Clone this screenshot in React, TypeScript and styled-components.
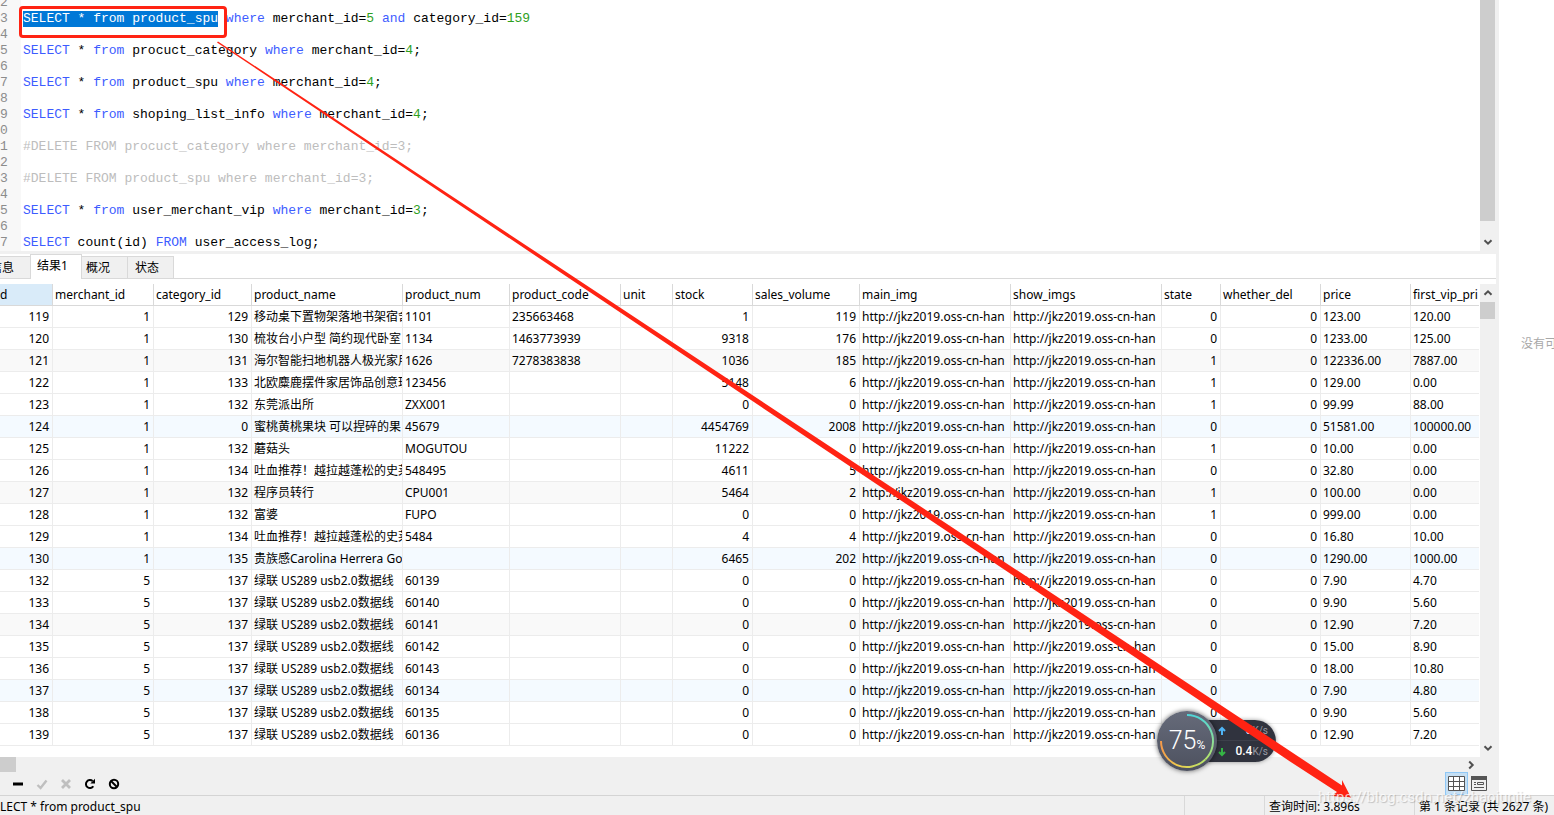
import React from "react";
import styled, { createGlobalStyle } from "styled-components";

const GlobalStyle = createGlobalStyle`
  *, *::before, *::after { box-sizing: border-box; }
  body {
    margin: 0;
    background: #fff;
    color: #000;
    font: 12px/16px "Noto Sans", "Noto Sans CJK SC", sans-serif;
  }
  button { font: inherit; color: inherit; }
`;

const Window = styled.div`
  position: relative;
  display: flex;
  flex-direction: column;
  min-height: 100vh;
  overflow: hidden;
`;

const Workspace = styled.div`
  display: flex;
  flex: 1;
`;

const QueryPane = styled.main`
  display: flex;
  flex: 1;
  flex-direction: column;
  min-width: 0;
  background: #f0f0f0;
`;

const InfoPane = styled.aside`
  display: flex;
  width: 55px;
  padding: 336px 0 0 22px;
  overflow: hidden;
  background: #fff;
  color: #a8a8a8;
  white-space: nowrap;
`;

/* SQL editor */

const Editor = styled.section`
  display: flex;
  height: 251px;
  margin-bottom: 3px;
  padding-right: 4px;
  background: #f0f0f0;
`;

const CodeArea = styled.div`
  display: flex;
  flex: 1;
  flex-direction: column;
  justify-content: flex-end;
  min-width: 0;
  overflow: hidden;
  background: linear-gradient(to right, #f8f8f8 21px, #fff 21px);
`;

const CodeLine = styled.div`
  display: flex;
  flex: none;
  height: 16px;
  font: 13px/16px "Liberation Mono", monospace;
  white-space: pre;
`;

const LineNumber = styled.span`
  width: 23px;
  color: #8c8c8c;
`;

const tokenColors = {
  keyword: "#3d5cff",
  number: "#2ea01e",
  comment: "#bdbdbd",
  plain: "#000",
};

const Token = styled.span<{ $kind: keyof typeof tokenColors }>`
  color: ${(p) => tokenColors[p.$kind]};
`;

const Selection = styled.mark`
  position: relative;
  background: #0078d7;
  color: #fff;
`;

const SelectionFrame = styled.span`
  position: absolute;
  inset: -5px -9px -11px -4px;
  border: 3px solid #ff2313;
  border-radius: 4px;
`;

/* Scroll bars */

const VScroll = styled.div<{ $width: number }>`
  display: flex;
  flex-direction: column;
  width: ${(p) => p.$width}px;
  background: #f0f0f0;
`;

const VThumb = styled.div<{ $size: number }>`
  width: 15px;
  height: ${(p) => p.$size}px;
  background: #cdcdcd;
`;

const ScrollButton = styled.button`
  display: flex;
  align-items: center;
  justify-content: center;
  width: 15px;
  height: 18px;
  padding: 0;
  border: 0;
  background: none;
`;

const Spacer = styled.div`
  flex: 1;
`;

const HScroll = styled.div`
  display: flex;
  align-items: center;
  height: 15px;
  padding-right: 21px;
`;

const HThumb = styled.div`
  width: 16px;
  height: 15px;
  background: #cdcdcd;
`;

/* Result tabs */

const TabBar = styled.div`
  display: flex;
  align-items: flex-end;
  height: 25px;
  margin-right: 3px;
  background: #fff;
  box-shadow: inset 0 -1px #d9d9d9;
`;

const Tab = styled.button<{ $active?: boolean; $width: number }>`
  display: flex;
  justify-content: ${(p) => (p.$width < 40 ? "flex-end" : "flex-start")};
  width: ${(p) => p.$width}px;
  height: ${(p) => (p.$active ? 25 : 23)}px;
  padding: ${(p) => (p.$active ? "3px 0 0 6px" : p.$width < 40 ? "3px 16px 0 0" : "3px 0 0 4px")};
  overflow: hidden;
  border: 1px solid #d9d9d9;
  border-width: ${(p) => (p.$active ? "1px 1px 0" : p.$width < 40 ? "1px 0" : "1px 1px 1px 0")};
  background: ${(p) => (p.$active ? "#fff" : "#f0f0f0")};
  white-space: nowrap;
`;

/* Result grid */

const Results = styled.section`
  display: flex;
  flex: 1;
  padding-top: 5px;
  margin-right: 3px;
  background: #fff;
`;

const GridArea = styled.div`
  flex: 1;
  min-width: 0;
  overflow: hidden;
  padding-right: 1px;
`;

const DataTable = styled.table`
  width: 100%;
  border-spacing: 0;
  table-layout: fixed;
`;

const HeadCell = styled.th`
  height: 22px;
  padding: 0 0 0 2px;
  overflow: hidden;
  border-right: 1px solid #d9d9d9;
  border-bottom: 1px solid #d9d9d9;
  font-weight: 400;
  line-height: 20px;
  text-align: left;
  white-space: nowrap;
  &:first-child { padding-left: 0; background: #d9ebf9; }
  &:last-child { border-right: 0; }
`;

const Row = styled.tr<{ $index: number }>`
  background: ${(p) => (p.$index % 6 === 2 ? "#f9f9f9" : p.$index % 6 === 5 ? "#f4faff" : "#fff")};
`;

const Cell = styled.td<{ $numeric: boolean }>`
  height: 22px;
  padding: 0 ${(p) => (p.$numeric ? 3 : 0)}px 0 2px;
  overflow: hidden;
  border-right: 1px solid #ececec;
  border-bottom: 1px solid #ececec;
  line-height: 21px;
  text-align: ${(p) => (p.$numeric ? "right" : "left")};
  white-space: nowrap;
  &:last-child { border-right: 0; }
`;

/* Record toolbar and status bar */

const Toolbar = styled.div`
  display: flex;
  align-items: center;
  height: 23px;
  padding: 0 8px 0 6px;
`;

const ToolButton = styled.button`
  display: flex;
  align-items: center;
  justify-content: center;
  width: 24px;
  height: 22px;
  padding: 0;
  border: 0;
  background: none;
  color: #000;
  &:disabled { color: #bfbfbf; }
`;

const ViewButton = styled.button<{ $active?: boolean }>`
  display: flex;
  align-items: center;
  justify-content: center;
  width: 23px;
  height: 23px;
  padding: 0;
  border: 1px solid ${(p) => (p.$active ? "#90c8f6" : "transparent")};
  background: ${(p) => (p.$active ? "#c5dff4" : "none")};
`;

const StatusBar = styled.footer`
  display: flex;
  height: 20px;
  overflow: hidden;
  border-top: 1px solid #d4d4d4;
  background: #f0f0f0;
  line-height: 21px;
  white-space: nowrap;
`;

const StatusCell = styled.div<{ $width?: number }>`
  flex: ${(p) => (p.$width ? "none" : "1")};
  width: ${(p) => (p.$width ? p.$width + "px" : "auto")};
  padding-left: ${(p) => (p.$width ? 4 : 0)}px;
  border-left: ${(p) => (p.$width ? "1px solid #d9d9d9" : "0")};
`;

/* Floating system monitor */

const Monitor = styled.div`
  position: absolute;
  top: 711px;
  left: 1157px;
  display: flex;
  align-items: center;
  color: #fff;
`;

const Gauge = styled.div`
  position: relative;
  z-index: 1;
  display: flex;
  align-items: baseline;
  justify-content: center;
  width: 60px;
  height: 60px;
  border-radius: 50%;
  background: linear-gradient(#666b7a, #4d515f);
  box-shadow: 0 0 5px rgba(0, 0, 0, 0.6);
  font: 300 25px/60px Roboto, sans-serif;
`;

const Percent = styled.small`
  font-size: 12px;
  font-weight: 400;
`;

const GaugeRing = styled.svg`
  position: absolute;
  inset: 0;
`;

const Speeds = styled.div`
  width: 82px;
  height: 42px;
  margin-left: -23px;
  padding: 0 8px 0 22px;
  border-radius: 0 21px 21px 0;
  background: linear-gradient(#30333e 20px, #3d404b 20px, #3d404b 21px, #30333e 21px);
  box-shadow: 0 0 4px rgba(0, 0, 0, 0.4);
`;

const Speed = styled.div`
  display: flex;
  align-items: center;
  height: 21px;
  font: 500 12px/21px Roboto, sans-serif;
`;

const Unit = styled.span`
  color: #9a9ca4;
  font-size: 10px;
  font-weight: 400;
`;

const Watermark = styled.div`
  position: absolute;
  right: 23px;
  bottom: 8px;
  color: rgba(255, 255, 255, 0.75);
  font: 15px/20px Roboto, sans-serif;
  text-shadow: 1px 1px 1px rgba(0, 0, 0, 0.2);
`;

const Annotation = styled.svg`
  position: absolute;
  top: 0;
  left: 0;
  pointer-events: none;
`;

function Chevron({ turn }: { turn: number }) {
  return (
    <svg width="10" height="10" viewBox="0 0 10 10">
      <path d="M1.5 3.2 5 6.7 8.5 3.2" fill="none" stroke="#505050" strokeWidth="2" transform={`rotate(${turn} 5 5)`} />
    </svg>
  );
}

const keywords = new Set(["SELECT", "from", "FROM", "where", "and"]);

const lines: [string, string][] = [
  ["2", ""],
  ["3", "SELECT * from product_spu where merchant_id=5 and category_id=159"],
  ["4", ""],
  ["5", "SELECT * from procuct_category where merchant_id=4;"],
  ["6", ""],
  ["7", "SELECT * from product_spu where merchant_id=4;"],
  ["8", ""],
  ["9", "SELECT * from shoping_list_info where merchant_id=4;"],
  ["0", ""],
  ["1", "#DELETE FROM procuct_category where merchant_id=3;"],
  ["2", ""],
  ["3", "#DELETE FROM product_spu where merchant_id=3;"],
  ["4", ""],
  ["5", "SELECT * from user_merchant_vip where merchant_id=3;"],
  ["6", ""],
  ["7", "SELECT count(id) FROM user_access_log;"],
];

const selected = "SELECT * from product_spu";

function Sql({ text }: { text: string }) {
  if (text.startsWith("#")) return <Token $kind="comment">{text}</Token>;
  return (
    <>
      {text.split(/(\b(?:SELECT|from|FROM|where|and)\b|\b\d+\b)/).map((part, i) => (
        <Token key={i} $kind={keywords.has(part) ? "keyword" : /^\d+$/.test(part) ? "number" : "plain"}>
          {part}
        </Token>
      ))}
    </>
  );
}

const columns: { name: string; width?: number; numeric?: boolean }[] = [
  { name: "d", width: 53, numeric: true },
  { name: "merchant_id", width: 101, numeric: true },
  { name: "category_id", width: 98, numeric: true },
  { name: "product_name", width: 151 },
  { name: "product_num", width: 107 },
  { name: "product_code", width: 111 },
  { name: "unit", width: 52 },
  { name: "stock", width: 80, numeric: true },
  { name: "sales_volume", width: 107, numeric: true },
  { name: "main_img", width: 151 },
  { name: "show_imgs", width: 151 },
  { name: "state", width: 59, numeric: true },
  { name: "whether_del", width: 100, numeric: true },
  { name: "price", width: 90 },
  { name: "first_vip_pri" },
];

const url = "http://jkz2019.oss-cn-han";
const cable = "绿联 US289 usb2.0数据线";

/* id, merchant, category, name, num, code, stock, sales, state, price, vip price */
const records = [
  ["119", "1", "129", "移动桌下置物架落地书架宿舍", "1101", "235663468", "1", "119", "0", "123.00", "120.00"],
  ["120", "1", "130", "梳妆台小户型 简约现代卧室", "1134", "1463773939", "9318", "176", "0", "1233.00", "125.00"],
  ["121", "1", "131", "海尔智能扫地机器人极光家用", "1626", "7278383838", "1036", "185", "1", "122336.00", "7887.00"],
  ["122", "1", "133", "北欧麋鹿摆件家居饰品创意玫", "123456", "", "5148", "6", "1", "129.00", "0.00"],
  ["123", "1", "132", "东莞派出所", "ZXX001", "", "0", "0", "1", "99.99", "88.00"],
  ["124", "1", "0", "蜜桃黄桃果块 可以捏碎的果", "45679", "", "4454769", "2008", "0", "51581.00", "100000.00"],
  ["125", "1", "132", "蘑菇头", "MOGUTOU", "", "11222", "0", "1", "10.00", "0.00"],
  ["126", "1", "134", "吐血推荐！越拉越蓬松的史莱", "548495", "", "4611", "5", "0", "32.80", "0.00"],
  ["127", "1", "132", "程序员转行", "CPU001", "", "5464", "2", "1", "100.00", "0.00"],
  ["128", "1", "132", "富婆", "FUPO", "", "0", "0", "1", "999.00", "0.00"],
  ["129", "1", "134", "吐血推荐！越拉越蓬松的史莱", "5484", "", "4", "4", "0", "16.80", "10.00"],
  ["130", "1", "135", "贵族感Carolina Herrera Go", "", "", "6465", "202", "0", "1290.00", "1000.00"],
  ["132", "5", "137", cable, "60139", "", "0", "0", "0", "7.90", "4.70"],
  ["133", "5", "137", cable, "60140", "", "0", "0", "0", "9.90", "5.60"],
  ["134", "5", "137", cable, "60141", "", "0", "0", "0", "12.90", "7.20"],
  ["135", "5", "137", cable, "60142", "", "0", "0", "0", "15.00", "8.90"],
  ["136", "5", "137", cable, "60143", "", "0", "0", "0", "18.00", "10.80"],
  ["137", "5", "137", cable, "60134", "", "0", "0", "0", "7.90", "4.80"],
  ["138", "5", "137", cable, "60135", "", "0", "0", "0", "9.90", "5.60"],
  ["139", "5", "137", cable, "60136", "", "0", "0", "0", "12.90", "7.20"],
];

const rows = records.map(([id, merchant, category, name, num, code, stock, sales, state, price, vip]) => [
  id, merchant, category, name, num, code, "", stock, sales, url, url, state, "0", price, vip,
]);

export default function App() {
  return (
    <Window>
      <GlobalStyle />
      <Workspace>
        <QueryPane>
          <Editor>
            <CodeArea>
              {lines.map(([number, text], i) => (
                <CodeLine key={i}>
                  <LineNumber>{number}</LineNumber>
                  {i === 1 ? (
                    <>
                      <Selection>
                        {selected}
                        <SelectionFrame />
                      </Selection>
                      <Sql text={text.slice(selected.length)} />
                    </>
                  ) : (
                    <Sql text={text} />
                  )}
                </CodeLine>
              ))}
            </CodeArea>
            <VScroll $width={15}>
              <VThumb $size={221} />
              <Spacer />
              <ScrollButton aria-label="Scroll down"><Chevron turn={0} /></ScrollButton>
            </VScroll>
          </Editor>
          <TabBar>
            <Tab $width={30}>信息</Tab>
            <Tab $width={52} $active>结果1</Tab>
            <Tab $width={46}>概况</Tab>
            <Tab $width={46}>&nbsp;状态</Tab>
          </TabBar>
          <Results>
            <GridArea>
              <DataTable>
                <colgroup>
                  {columns.map((c) => <col key={c.name} width={c.width} />)}
                </colgroup>
                <thead>
                  <tr>{columns.map((c) => <HeadCell key={c.name}>{c.name}</HeadCell>)}</tr>
                </thead>
                <tbody>
                  {rows.map((row, r) => (
                    <Row key={r} $index={r}>
                      {row.map((value, c) => (
                        <Cell key={c} $numeric={!!columns[c].numeric}>{value}</Cell>
                      ))}
                    </Row>
                  ))}
                </tbody>
              </DataTable>
            </GridArea>
            <VScroll $width={16}>
              <ScrollButton aria-label="Scroll up"><Chevron turn={180} /></ScrollButton>
              <VThumb $size={17} />
              <Spacer />
              <ScrollButton aria-label="Scroll down"><Chevron turn={0} /></ScrollButton>
            </VScroll>
          </Results>
          <HScroll>
            <HThumb />
            <Spacer />
            <ScrollButton aria-label="Scroll right"><Chevron turn={-90} /></ScrollButton>
          </HScroll>
          <Toolbar>
            <ToolButton aria-label="Delete record">
              <svg width="12" height="12"><path d="M1 4.500h10v3H1z" /></svg>
            </ToolButton>
            <ToolButton aria-label="Apply" disabled>
              <svg width="12" height="12"><path d="M1.500 7 4.600 10 10.500 2.500" fill="none" stroke="currentColor" strokeWidth="2.4" /></svg>
            </ToolButton>
            <ToolButton aria-label="Discard" disabled>
              <svg width="12" height="12"><path d="M2 2l8 8M10 2l-8 8" fill="none" stroke="currentColor" strokeWidth="2.8" /></svg>
            </ToolButton>
            <ToolButton aria-label="Refresh">
              <svg width="12" height="12">
                <path d="M9.3 8.2A4 4 0 1 1 8.6 3" fill="none" stroke="currentColor" strokeWidth="2" />
                <path d="M11 .8v4.7H6.3z" />
              </svg>
            </ToolButton>
            <ToolButton aria-label="Stop">
              <svg width="12" height="12">
                <circle cx="6" cy="6" r="4.2" fill="none" stroke="currentColor" strokeWidth="2" />
                <path d="M3 3l6 6" stroke="currentColor" strokeWidth="2" />
              </svg>
            </ToolButton>
            <Spacer />
            <ViewButton aria-label="Grid view" $active>
              <svg width="17" height="15" fill="none" stroke="#555">
                <path d="M.5.5h16v14H.5zM5.5.5v14M11.5.5v14M.5 5.5h16M.5 10.5h16" fill="#fff" />
              </svg>
            </ViewButton>
            <ViewButton aria-label="Form view">
              <svg width="17" height="15" fill="none" stroke="#555">
                <path d="M.5.5h15v14H.5z" />
                <path d="M0 2h16" strokeWidth="4" />
                <path d="M3 6.5h2M6.500 6.500h6v2h-6zM3 8.500h2M3 11.500h10" />
              </svg>
            </ViewButton>
          </Toolbar>
        </QueryPane>
        <InfoPane>没有可用</InfoPane>
      </Workspace>
      <StatusBar>
        <StatusCell>LECT * from product_spu</StatusCell>
        <StatusCell $width={80} />
        <StatusCell $width={150}>查询时间: 3.896s</StatusCell>
        <StatusCell $width={140}>第 1 条记录 (共 2627 条)</StatusCell>
      </StatusBar>
      <Monitor>
        <Gauge>
          <GaugeRing width="60" height="60" fill="none" strokeWidth="2">
            <defs>
              <linearGradient id="ringRight" x1="0" y1="0" x2="0" y2="1">
                <stop offset="0" stopColor="#4fd6d8" />
                <stop offset="1" stopColor="#b4e36a" />
              </linearGradient>
              <linearGradient id="ringLeft" x1="1" y1="0" x2="0" y2="0">
                <stop offset="0" stopColor="#b4e36a" />
                <stop offset="0.6" stopColor="#f0d04e" />
                <stop offset="1" stopColor="#f39a4a" />
              </linearGradient>
            </defs>
            <path d="M30 4A26 26 0 0 1 48.4 48.4" stroke="url(#ringRight)" />
            <path d="M48.4 48.4A26 26 0 0 1 4 30" stroke="url(#ringLeft)" />
          </GaugeRing>
          75<Percent>%</Percent>
        </Gauge>
        <Speeds>
          <Speed>
            <svg width="12" height="10" fill="none" stroke="#4fb4f5" strokeWidth="2"><path d="M6 9V2M3 5l3-3 3 3" /></svg>
            <Spacer />0<Unit>K/s</Unit>
          </Speed>
          <Speed>
            <svg width="12" height="10" fill="none" stroke="#35b545" strokeWidth="2"><path d="M6 1v7M3 5l3 3 3-3" /></svg>
            <Spacer />0.4<Unit>K/s</Unit>
          </Speed>
        </Speeds>
      </Monitor>
      <Annotation width="1360" height="805">
        <path fill="#ff2313" d="M218 41.500 1213 700 1342 785.500 1342 780 1351 797.500 1332 796 1337 792 1290 761.500 1199 700 217 42.500z" />
      </Annotation>
      <Watermark>https://blog.csdn.net/zhaojunjie</Watermark>
    </Window>
  );
}
